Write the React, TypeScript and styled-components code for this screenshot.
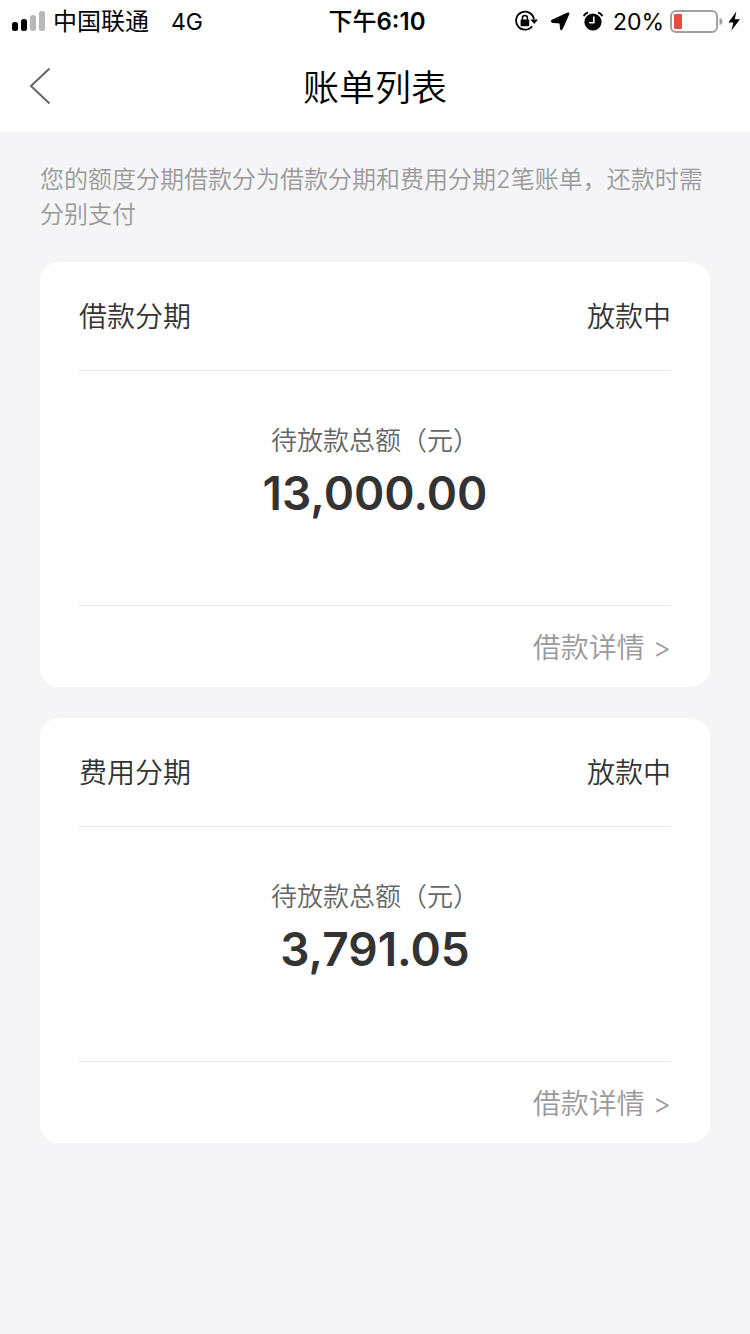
import React from "react";
import styled, { createGlobalStyle } from "styled-components";

const GlobalStyle = createGlobalStyle`
  * { box-sizing: border-box; }
  body {
    margin: 0;
    background: #f5f5f8;
    color: #333;
    font-family: Inter, "Noto Sans CJK SC", sans-serif;
  }
  h1, h2, p { margin: 0; font-weight: 400; }
`;

const StatusBar = styled.div`
  display: grid;
  grid-template-columns: 1fr auto 1fr;
  align-items: center;
  height: 40px;
  padding: 0 8px 0 12px;
  background: #fff;
  color: #000;
  font-size: 24px;
  line-height: 40px;
  white-space: nowrap;
`;

const Carrier = styled.div`
  display: flex;
  align-items: center;
  gap: 8px;
  padding-top: 2px;
`;

const Network = styled.span`
  margin-left: 14px;
  font-size: 23px;
`;

const Clock = styled.time`
  padding-top: 2px;
  font-size: 24px;
  font-weight: 600;
`;

const Hour = styled.span`
  font-weight: 500;
`;

const Indicators = styled.div`
  display: flex;
  align-items: center;
  justify-content: flex-end;
`;

const Charge = styled.span`
  margin: 0 6px 0 10px;
  padding-top: 2px;
  font-size: 23px;
`;

const TitleBar = styled.header`
  display: grid;
  grid-template-columns: 80px 1fr 80px;
  align-items: center;
  height: 92px;
  background: #fff;
  color: #000;
`;

const BackButton = styled.button`
  display: flex;
  align-items: center;
  height: 92px;
  padding: 0 0 0 28px;
  border: 0;
  background: none;
`;

const Title = styled.h1`
  padding-top: 4px;
  font-size: 36px;
  font-weight: 350;
  line-height: 52px;
  text-align: center;
`;

const Content = styled.main`
  padding: 30px 40px;
`;

const Notice = styled.p`
  margin-bottom: 30px;
  color: #999;
  font-size: 24px;
  font-weight: 350;
  line-height: 35px;
`;

const CardList = styled.div`
  display: flex;
  flex-direction: column;
  gap: 31px;
`;

const Card = styled.section`
  padding: 0 39px;
  border-radius: 20px;
  background: #fff;
`;

const CardHeader = styled.div`
  display: flex;
  align-items: center;
  justify-content: space-between;
  height: 109px;
  padding-top: 2px;
  border-bottom: 1px solid #e6e6e6;
  font-size: 28px;
  line-height: 40px;
`;

const CardTitle = styled.h2`
  font-size: 28px;
  font-weight: 350;
`;

const State = styled.span`
  font-weight: 350;
`;

const CardBody = styled.div`
  display: flex;
  flex-direction: column;
  align-items: center;
  height: 234px;
  padding-top: 50px;
`;

const Label = styled.p`
  color: #666;
  font-size: 26px;
  font-weight: 350;
  line-height: 40px;
`;

const Amount = styled.p`
  font-size: 46px;
  font-weight: 600;
  line-height: 64px;
`;

const CardFooter = styled.div`
  display: flex;
  align-items: center;
  justify-content: flex-end;
  height: 82px;
  padding-top: 2px;
  border-top: 1px solid #e6e6e6;
`;

const DetailLink = styled.a`
  color: #999;
  font-size: 28px;
  font-weight: 350;
  line-height: 40px;
  text-decoration: none;
`;

const bills = [
  { title: "借款分期", state: "放款中", amount: "13,000.00" },
  { title: "费用分期", state: "放款中", amount: "3,791.05" },
];

const SignalIcon = () => (
  <svg width="33" height="22" viewBox="0 0 33 22" aria-hidden="true">
    <rect x="0" y="11" width="6" height="9" rx="2.5" />
    <rect x="9" y="8" width="6" height="12" rx="2.5" />
    <rect x="18" y="4" width="6" height="16" rx="2.5" fill="#b8b8b8" />
    <rect x="27" y="0" width="6" height="20" rx="2.5" fill="#b8b8b8" />
  </svg>
);

const StatusIcons = () => (
  <svg width="88" height="22" viewBox="0 0 88 22" aria-hidden="true">
    <path d="M17.2 16.2A9 9 0 1 1 19 9.4" fill="none" stroke="#000" strokeWidth="1.8" />
    <path d="M15.4 9.4h7.6l-3.8 4.6z" />
    <rect x="5.6" y="9.6" width="8.6" height="6.6" rx="1" />
    <path d="M7.4 10.6V8a2.5 2.5 0 0 1 5 0v2.6" fill="none" stroke="#000" strokeWidth="1.5" />
    <path d="M36.6 10.4 52.6 3Q54.4 2.4 53.8 4.2L47 19.4Q46.2 20.6 45.6 19.2L45 13 37.2 12.4Q35.4 11.6 36.6 10.4Z" stroke="#000" strokeWidth="1" strokeLinejoin="round" />
    <circle cx="78" cy="12" r="8.6" />
    <path d="M68.8 6.2Q69.6 3.4 73 2.6M87.2 6.2Q86.4 3.4 83 2.6" fill="none" stroke="#000" strokeWidth="1.8" />
    <path d="M78.8 6.6v6.2h-4.6" fill="none" stroke="#fff" strokeWidth="1.6" />
  </svg>
);

const BatteryIcon = () => (
  <svg width="72" height="24" viewBox="0 0 72 24" aria-hidden="true">
    <rect x="1" y="2" width="46" height="21" rx="5" fill="none" stroke="#a0a0a0" strokeWidth="2" />
    <rect x="4" y="5" width="8" height="15" rx="1" fill="#eb4d3d" />
    <path d="M49.5 9q3 .8 3 3.5t-3 3.5z" fill="#a0a0a0" />
    <path d="M66.4 2.4 58.4 13.4h5L61.4 21.4l8.6-11.2h-5.2z" />
  </svg>
);

const BackIcon = () => (
  <svg width="24" height="38" viewBox="0 0 24 38" aria-hidden="true">
    <path d="M21.5 1.5 3 19l18.5 17.5" fill="none" stroke="#666" strokeWidth="2" />
  </svg>
);

export default function App() {
  return (
    <>
      <GlobalStyle />
      <StatusBar>
        <Carrier>
          <SignalIcon />
          <span>中国联通</span>
          <Network>4G</Network>
        </Carrier>
        <Clock dateTime="18:10"><Hour>下午</Hour>6:10</Clock>
        <Indicators>
          <StatusIcons />
          <Charge>20%</Charge>
          <BatteryIcon />
        </Indicators>
      </StatusBar>
      <TitleBar>
        <BackButton type="button" aria-label="返回">
          <BackIcon />
        </BackButton>
        <Title>账单列表</Title>
      </TitleBar>
      <Content>
        <Notice>您的额度分期借款分为借款分期和费用分期2笔账单，还款时需分别支付</Notice>
        <CardList>
          {bills.map((bill) => (
            <Card key={bill.title}>
              <CardHeader>
                <CardTitle>{bill.title}</CardTitle>
                <State>{bill.state}</State>
              </CardHeader>
              <CardBody>
                <Label>待放款总额（元）</Label>
                <Amount>{bill.amount}</Amount>
              </CardBody>
              <CardFooter>
                <DetailLink href="#">借款详情 &gt;</DetailLink>
              </CardFooter>
            </Card>
          ))}
        </CardList>
      </Content>
    </>
  );
}
